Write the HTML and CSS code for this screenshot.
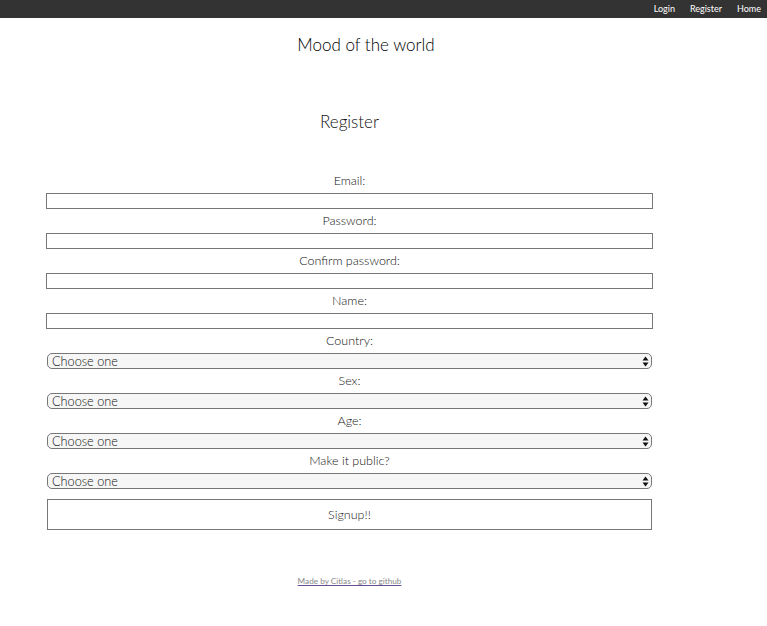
FILE: index.html
```html
<!DOCTYPE html>
<html>
<head>
<meta charset="utf-8">
<link rel="stylesheet" href="styles.css">
</head>
<body>
<nav class="nav">
  <a class="nav-link" href="#">Login</a>
  <a class="nav-link" href="#">Register</a>
  <a class="nav-link" href="#">Home</a>
</nav>
<header class="header"><h1 class="title">Mood of the world</h1></header>
<main class="main">
  <h2 class="subtitle">Register</h2>
  <form class="form">
    <label class="label">Email:</label>
    <input class="input" type="text">
    <label class="label">Password:</label>
    <input class="input" type="password">
    <label class="label">Confirm password:</label>
    <input class="input" type="password">
    <label class="label">Name:</label>
    <input class="input" type="text">
    <label class="label">Country:</label>
    <div class="select-wrap"><select class="select"><option>Choose one</option></select><svg class="arrows" width="7" height="11" viewBox="0 0 7 11"><path d="M3.5 0.5 L6.5 4.5 L0.5 4.5 Z M3.5 10.5 L6.5 6.5 L0.5 6.5 Z" fill="#111"/></svg></div>
    <label class="label">Sex:</label>
    <div class="select-wrap"><select class="select"><option>Choose one</option></select><svg class="arrows" width="7" height="11" viewBox="0 0 7 11"><path d="M3.5 0.5 L6.5 4.5 L0.5 4.5 Z M3.5 10.5 L6.5 6.5 L0.5 6.5 Z" fill="#111"/></svg></div>
    <label class="label">Age:</label>
    <div class="select-wrap"><select class="select"><option>Choose one</option></select><svg class="arrows" width="7" height="11" viewBox="0 0 7 11"><path d="M3.5 0.5 L6.5 4.5 L0.5 4.5 Z M3.5 10.5 L6.5 6.5 L0.5 6.5 Z" fill="#111"/></svg></div>
    <label class="label">Make it public?</label>
    <div class="select-wrap"><select class="select"><option>Choose one</option></select><svg class="arrows" width="7" height="11" viewBox="0 0 7 11"><path d="M3.5 0.5 L6.5 4.5 L0.5 4.5 Z M3.5 10.5 L6.5 6.5 L0.5 6.5 Z" fill="#111"/></svg></div>
    <button class="button" type="button">Signup!!</button>
  </form>
  <footer class="footer"><a class="footer-link" href="#">Made by Citlas - go to github</a></footer>
</main>
</body>
</html>
```
FILE: styles.css
```css
* { box-sizing: border-box; }
body {
  margin: 0;
  font-family: "Lato", "Open Sans", sans-serif;
  font-weight: 300;
  color: #222;
  background: #fff;
}
.nav {
  height: 18px;
  background: #333;
  display: flex;
  justify-content: flex-end;
  align-items: center;
  gap: 15px;
  padding-right: 6px;
}
.nav-link {
  color: #fff;
  font-size: 9px;
  font-weight: 400;
  text-decoration: none;
  line-height: 18px;
}
.header {
  padding-right: 35px;
  text-align: center;
}
.title {
  margin: 17px 0 0;
  font-size: 17px;
  font-weight: 300;
  line-height: 20px;
  color: #000;
}
.main {
  margin-left: 47px;
  width: 605px;
}
.subtitle {
  margin: 57px 0 0;
  text-align: center;
  font-size: 17px;
  font-weight: 300;
  line-height: 20px;
  color: #111;
}
.form {
  margin-top: 37px;
  display: flex;
  flex-direction: column;
}
.label {
  display: block;
  text-align: center;
  font-size: 12.5px;
  line-height: 24px;
  color: #111;
}
.input {
  display: block;
  height: 16px;
  margin: 0 -1px;
  border: 1px solid #777;
  padding: 0 3px;
  font: inherit;
  background: #fff;
}
.select-wrap {
  position: relative;
  height: 16px;
}
.select {
  appearance: none;
  -webkit-appearance: none;
  display: block;
  width: 100%;
  height: 16px;
  border: 1px solid #777;
  border-radius: 5px;
  background: #f6f6f6;
  padding: 0 0 0 4px;
  font-family: "Lato", sans-serif;
  font-weight: 300;
  font-size: 12.7px;
  line-height: 14px;
  color: #111;
}
.arrows {
  position: absolute;
  right: 3px;
  top: 2.5px;
}
.button {
  margin-top: 10px;
  height: 31px;
  border: 1px solid #777;
  background: #fff;
  font-family: "Lato", sans-serif;
  font-weight: 300;
  font-size: 12.5px;
  color: #222;
}
.footer {
  margin-top: 42px;
  text-align: center;
  line-height: 12px;
}
.footer-link {
  font-size: 8.2px;
  font-weight: 400;
  color: #888;
  text-decoration: underline;
  text-decoration-color: #6a4c93;
}
```
